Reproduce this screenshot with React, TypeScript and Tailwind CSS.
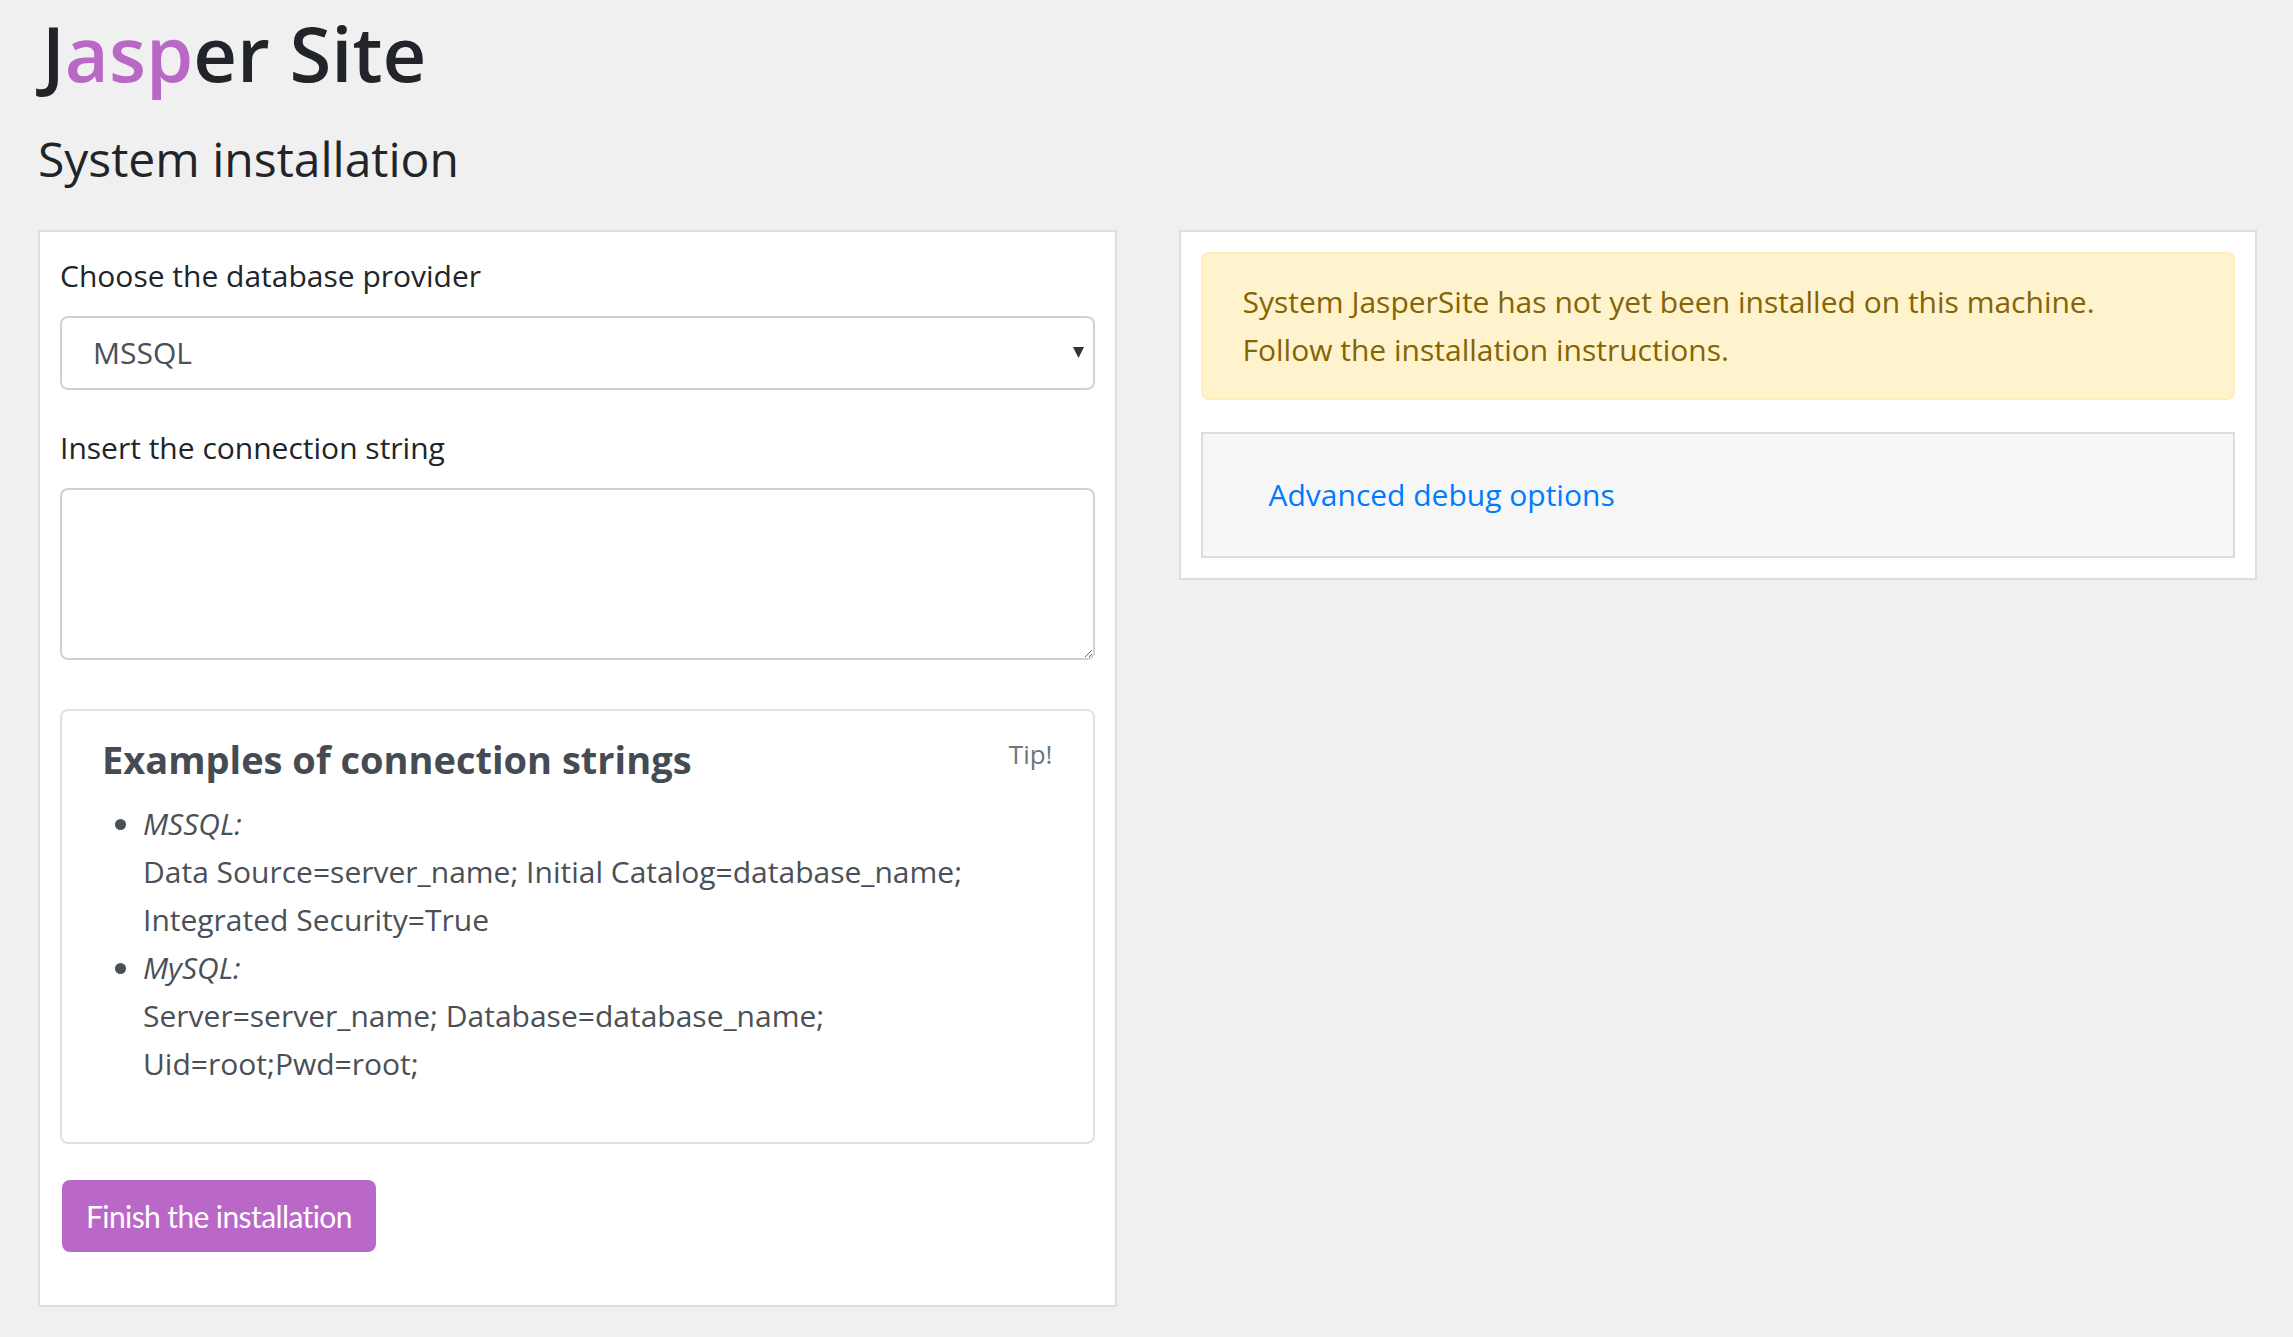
export default function App() {
  return (
    <div className="min-h-screen bg-[#f0f0f0] pl-[38px] pr-[36px] pt-[6px] pb-[40px] font-['Open_Sans','Noto_Sans',sans-serif] text-[30px] leading-[48px] text-[#212529]">
      <h1 className="pl-[4px] text-[76px] leading-[94px] font-semibold">
        J<span className="text-[#ba68c8]">asp</span>er Site
      </h1>
      <h2 className="mt-[30px] text-[48px] leading-[58px]">System installation</h2>

      <div className="mt-[42px] grid grid-cols-2 items-start gap-[62px]">
        {/* installation form */}
        <div className="border-2 border-[#dedede] bg-white px-[20px] pt-[20px] pb-[53px]">
          <label className="mb-[16px] block">Choose the database provider</label>
          <div className="relative">
            <select className="block h-[74px] w-full appearance-none rounded-[8px] border-2 border-[#d2d2d2] bg-white pl-[31px] text-[30px] text-[#495057] outline-none">
              <option>MSSQL</option>
              <option>MySQL</option>
            </select>
            <svg
              className="pointer-events-none absolute right-[11px] top-[31px]"
              width="11"
              height="11"
              viewBox="0 0 11 11"
            >
              <path d="M0 0h11L5.5 11z" fill="#333" />
            </svg>
          </div>

          <label className="mt-[34px] mb-[16px] block">Insert the connection string</label>
          <textarea className="block h-[172px] w-full rounded-[8px] border-2 border-[#d2d2d2] bg-white px-[24px] py-[12px] text-[30px] text-[#495057] outline-none" />

          <div className="mt-[49px] rounded-[8px] border-2 border-[#e2e2e2] px-[40px] pt-[26px] pb-[54px]">
            <div className="flex items-start justify-between">
              <h5 className="text-[38px] leading-[44px] font-bold text-[#454b52]">
                Examples of connection strings
              </h5>
              <small className="mt-[2px] text-[26px] leading-[30px] text-[#6c757d]">Tip!</small>
            </div>
            <ul className="mt-[19px] list-disc pl-[41px] text-[#495057]">
              <li className="whitespace-nowrap">
                <em>MSSQL:</em>
                <br />
                Data Source=server_name; Initial Catalog=database_name;
                <br />
                Integrated Security=True
              </li>
              <li className="whitespace-nowrap">
                <em>MySQL:</em>
                <br />
                Server=server_name; Database=database_name;
                <br />
                Uid=root;Pwd=root;
              </li>
            </ul>
          </div>

          <button className="mt-[36px] ml-[2px] h-[72px] rounded-[8px] bg-[#ba68c8] px-[24px] font-['Lato',sans-serif] text-[30px] tracking-[-0.6px] text-white">
            Finish the installation
          </button>
        </div>

        {/* status */}
        <div className="border-2 border-[#dedede] bg-white p-[20px]">
          <div className="rounded-[8px] border-2 border-[#ffeeba] bg-[#fff3cd] px-[40px] py-[24px] text-[#856404]">
            System JasperSite has not yet been installed on this machine.
            <br />
            Follow the installation instructions.
          </div>
          <div className="mt-[32px] border-2 border-[#dcdcdc] bg-[#f7f7f7] px-[40px] py-[25px]">
            <button className="px-[26px] py-[12px] text-[30px] leading-[48px] text-[#007bff]">
              Advanced debug options
            </button>
          </div>
        </div>
      </div>
    </div>
  );
}
